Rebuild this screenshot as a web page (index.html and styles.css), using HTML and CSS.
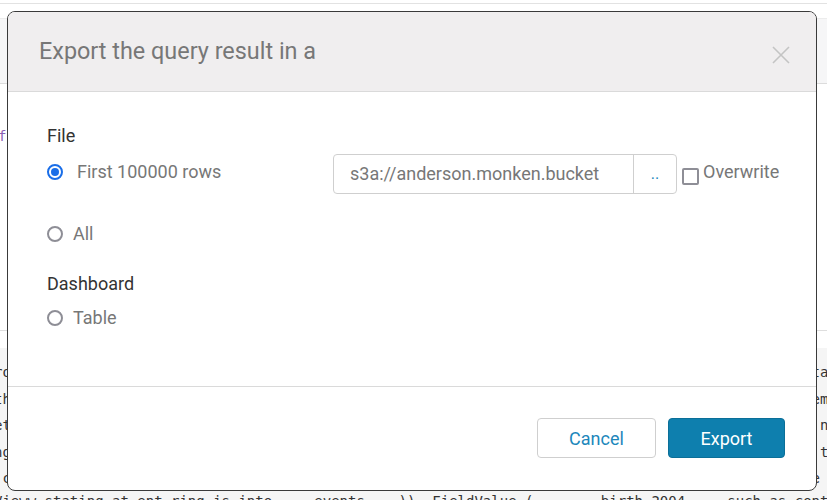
FILE: index.html
```html
<!DOCTYPE html>
<html>
<head>
<meta charset="utf-8">
<link rel="stylesheet" href="styles.css">
</head>
<body>
<div class="page">
  <div class="topline"></div>
  <div class="band"></div>
  <div class="content"><span class="kw">f</span></div>
  <div class="code">
    <div class="codeline">rom the streaming source, how many fields are sent to the sink before the data is written to the table: from</div>
    <div class="codeline">then the events window is computed with the new elements of stream of the data frame, when the elements</div>
    <div class="codeline">et the value that was part of the aggregation window and every element is represented, which does not count</div>
    <div class="codeline">ng the time range that gets selected in the dashboard for the data of the query result value with the na</div>
    <div class="codeline">.com statistics of the rows in each partition of the bucket to be exported using the format of the file .g</div>
    <div class="codeline last">Vieww stating at  ent  ring  is into  ... events ...)), FieldValue (  ...  ..  birth 2004 ... such as contains ...</div>
  </div>
</div>

<div class="modal">
  <div class="modal-header">
    <h1 class="modal-title">Export the query result in a</h1>
    <span class="close">
      <svg width="18" height="18" viewBox="0 0 18 18"><path d="M1 1 L17 17 M17 1 L1 17" stroke="#c4c4c4" stroke-width="1.6" fill="none"/></svg>
    </span>
  </div>
  <div class="modal-body">
    <div class="section-label">File</div>
    <div class="row first-row">
      <label class="opt opt-first"><span class="radio checked"></span><span class="opt-text wide">First 100000 rows</span></label>
      <div class="path-group">
        <div class="path-input">s3a://anderson.monken.bucket</div>
        <div class="path-btn">..</div>
      </div>
      <label class="check"><span class="box"></span><span class="check-text">Overwrite</span></label>
    </div>
    <label class="opt opt-all"><span class="radio"></span><span class="opt-text">All</span></label>
    <div class="section-label dash">Dashboard</div>
    <label class="opt opt-table"><span class="radio"></span><span class="opt-text">Table</span></label>
  </div>
  <div class="modal-footer">
    <button class="btn btn-cancel">Cancel</button>
    <button class="btn btn-export">Export</button>
  </div>
</div>
</body>
</html>
```

FILE: styles.css
```css
* { box-sizing: border-box; }
html, body { margin: 0; padding: 0; }
body {
  width: 827px;
  height: 500px;
  overflow: hidden;
  background: #fff;
  font-family: Roboto, "Liberation Sans", sans-serif;
  position: relative;
}
.page { width: 827px; }
.topline {
  height: 4px;
  border-bottom: 1px solid #e2e2e2;
}
.band {
  margin-top: 14px;
  height: 66px;
  background: #f6f6f7;
  border-top: 1px solid #ececec;
  border-bottom: 1px solid #dcdcdc;
}
.content {
  height: 247px;
  padding-top: 44px;
  border-bottom: 1px solid #dedede;
  font-family: "DejaVu Sans Mono", monospace;
  font-size: 14px;
}
.kw { color: #8b5fb4; margin-left: -2px; }
.code {
  margin-top: 17px;
  background: #f5f5f5;
  height: 160px;
  padding-top: 15px;
  font-family: "DejaVu Sans Mono", monospace;
  font-size: 14px;
  color: #333;
  white-space: nowrap;
  overflow: hidden;
}
.codeline {
  height: 26.5px;
  line-height: 18px;
  margin-left: -6px;
}
.codeline.last { margin-top: -4px; }

.modal {
  position: absolute;
  left: 7px;
  top: 11px;
  width: 810px;
  height: 480px;
  background: #fff;
  border: 1px solid #3a3a3a;
  border-radius: 8px;
  overflow: hidden;
  display: flex;
  flex-direction: column;
}
.modal-header {
  height: 80px;
  background: #f0eeef;
  border-bottom: 1px solid #dadada;
  display: flex;
  align-items: center;
  justify-content: space-between;
  padding: 0 26px 0 31px;
}
.modal-title {
  margin: 0;
  font-size: 23.4px;
  font-weight: 400;
  color: #777;
  margin-top: -2px;
}
.close { display: flex; margin-top: 6px; }

.modal-body {
  height: 295px;
  padding: 34px 0 0 39px;
  border-bottom: 1px solid #dadada;
}
.section-label {
  font-size: 18px;
  color: #333;
  line-height: 20px;
}
.row { display: flex; align-items: center; }
.first-row { margin-top: 8px; height: 40px; }
.opt {
  display: flex;
  align-items: center;
  font-size: 18px;
  color: #777;
  line-height: 20px;
}
.opt-first { width: 286px; align-self: flex-start; margin-top: 8px; }
.opt-text { margin-left: 10px; }
.opt-text.wide { margin-left: 14px; }
.radio {
  width: 16px;
  height: 16px;
  border-radius: 50%;
  border: 2px solid #8e8e96;
  flex: none;
  position: relative;
}
.radio.checked { border-color: #1a6ee8; }
.radio.checked::after {
  content: "";
  position: absolute;
  left: 2px; top: 2px;
  width: 8px; height: 8px;
  border-radius: 50%;
  background: #1a6ee8;
}
.path-group {
  display: flex;
  width: 344px;
  height: 40px;
  border: 1px solid #cfcfcf;
  border-radius: 4px;
  margin-top: -1px;
}
.path-input {
  flex: 1;
  padding-left: 16px;
  display: flex;
  align-items: center;
  font-size: 18px;
  color: #777;
  border-right: 1px solid #cfcfcf;
}
.path-btn {
  width: 42px;
  display: flex;
  align-items: center;
  justify-content: center;
  color: #1d87bb;
  font-size: 16px;
}
.check {
  display: flex;
  align-items: flex-start;
  margin-left: 5px;
  margin-top: -2px;
}
.box {
  width: 17px;
  height: 17px;
  border: 2px solid #8e8e96;
  border-radius: 2px;
  margin-top: 6px;
}
.check-text {
  margin-left: 4px;
  font-size: 18px;
  color: #777;
  line-height: 20px;
}
.opt-all { margin-top: 30px; }
.dash { margin-top: 30px; }
.opt-table { margin-top: 14px; }

.modal-footer {
  flex: 1;
  display: flex;
  justify-content: flex-end;
  align-items: flex-start;
  gap: 12px;
  padding: 31px 31px 0 0;
}
.btn {
  height: 40px;
  border-radius: 4px;
  font-family: Roboto, "Liberation Sans", sans-serif;
  font-size: 18px;
  cursor: pointer;
}
.btn-cancel {
  width: 119px;
  background: #fff;
  border: 1px solid #cfcfcf;
  color: #1d87bb;
}
.btn-export {
  width: 117px;
  background: #0e7fae;
  border: 1px solid #0b6f98;
  color: #fff;
}
```
